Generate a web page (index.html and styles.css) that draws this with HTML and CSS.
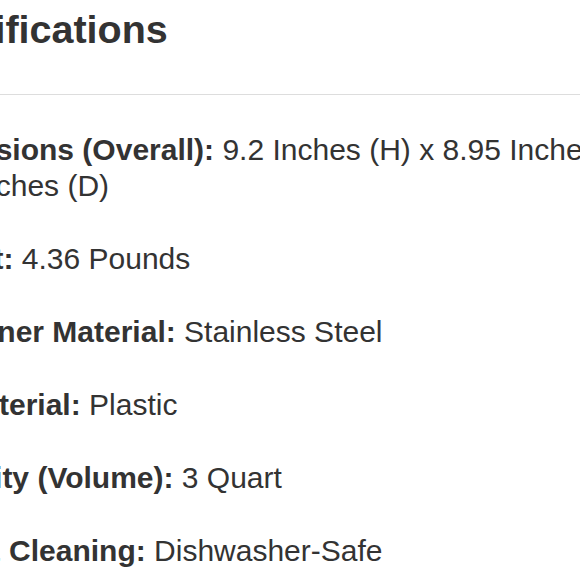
FILE: index.html
```html
<!DOCTYPE html>
<html>
<head>
<meta charset="utf-8">
<link rel="stylesheet" href="styles.css">
</head>
<body>
<section class="specs">
  <h2 class="specs-title">Specifications</h2>
  <hr class="specs-rule">
  <ul class="specs-list">
    <li class="spec"><span class="spec-label">Dimensions (Overall):</span> 9.2 Inches (H) x 8.95 Inches (W) x 8.95 Inches (D)</li>
    <li class="spec"><span class="spec-label">Weight:</span> 4.36 Pounds</li>
    <li class="spec"><span class="spec-label">Container Material:</span> Stainless Steel</li>
    <li class="spec"><span class="spec-label">Lid Material:</span> Plastic</li>
    <li class="spec"><span class="spec-label">Capacity (Volume):</span> 3 Quart</li>
    <li class="spec"><span class="spec-label">Care &amp; Cleaning:</span> Dishwasher-Safe</li>
  </ul>
</section>
</body>
</html>
```
FILE: styles.css
```css
html, body {
  margin: 0;
  padding: 0;
  background: #fff;
  overflow: hidden;
}
body {
  width: 580px;
  height: 580px;
  font-family: "Liberation Sans", Arial, Helvetica, sans-serif;
  color: #333;
}
.specs {
  margin-left: -96px;
  width: 900px;
}
.specs-title {
  margin: 0 0 0 -4px;
  padding-top: 7px;
  font-size: 39.5px;
  line-height: 44px;
  font-weight: bold;
  color: #333;
}
.specs-rule {
  border: 0;
  border-top: 1px solid #ddd;
  margin: 43px 0 0 96px;
  width: 680px;
}
.specs-list {
  list-style: none;
  margin: 0;
  padding: 0;
  padding-top: 37px;
  display: flex;
  flex-direction: column;
  gap: 37px;
  width: 800px;
}
.spec {
  font-size: 30px;
  line-height: 36px;
}
.spec-label {
  font-weight: bold;
}
```
